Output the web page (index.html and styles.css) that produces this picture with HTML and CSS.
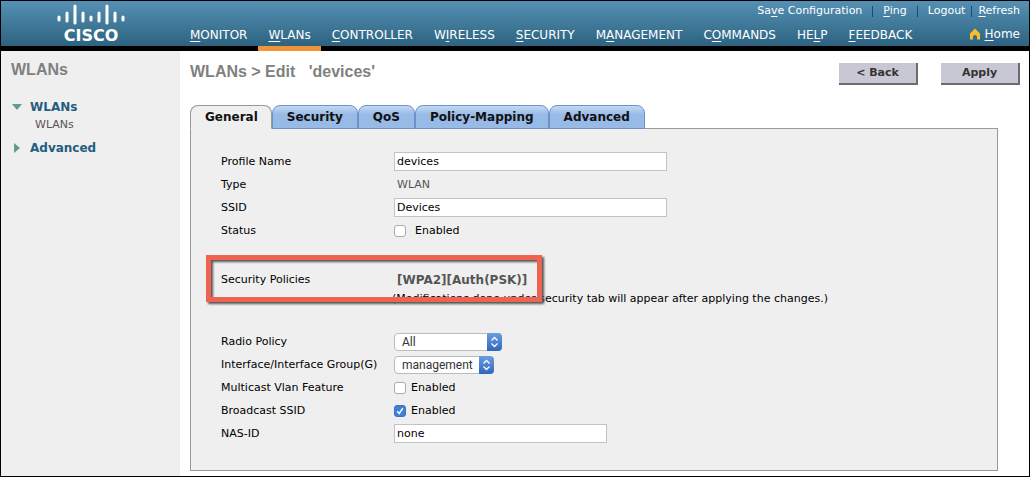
FILE: index.html
```html
<!DOCTYPE html>
<html lang="en">
<head>
<meta charset="utf-8">
<title>WLANs &gt; Edit 'devices'</title>
<link rel="stylesheet" href="styles.css">
</head>
<body>
<header class="header">
  <div class="brand">
    <svg class="logo" width="68" height="25" viewBox="0 0 68 25" aria-hidden="true">
      <path d="M2 16v3M10 12v8M18 5v17M26 12v8M34 16v3M42 12v8M50 5v17M58 12v8M66 16v3" stroke="#fff" stroke-width="3" stroke-linecap="round"/>
    </svg>
    <span class="logo-text">CISCO</span>
  </div>
  <nav class="nav" aria-label="Main">
    <a href="#"><u>M</u>ONITOR</a>
    <a href="#" class="current" aria-current="page"><u>W</u>LANs</a>
    <a href="#"><u>C</u>ONTROLLER</a>
    <a href="#">W<u>I</u>RELESS</a>
    <a href="#"><u>S</u>ECURITY</a>
    <a href="#">M<u>A</u>NAGEMENT</a>
    <a href="#">C<u>O</u>MMANDS</a>
    <a href="#">HE<u>L</u>P</a>
    <a href="#"><u>F</u>EEDBACK</a>
  </nav>
  <div class="tools">
    <div class="links">
      <a href="#">Sa<u>v</u>e Configuration</a><i class="bar"></i>
      <a href="#"><u>P</u>ing</a><i class="bar"></i>
      <a href="#">Logout</a><i class="bar tight"></i>
      <a href="#"><u>R</u>efresh</a>
    </div>
    <a class="home" href="#">
      <svg width="12" height="13" viewBox="0 0 12 13" aria-hidden="true"><path d="M1 5.500L6 0.500 11 5.500V11.500H8V8.500Q8 7 6 7T4 8.500V11.500H1Z" fill="#f8bd2c"/></svg>
      <span><u>H</u>ome</span>
    </a>
  </div>
</header>
<div class="body">
  <aside class="sidebar">
    <h2 class="title">WLANs</h2>
    <nav class="tree" aria-label="WLANs">
      <a class="branch" href="#"><svg width="12" height="12" viewBox="0 0 12 12" aria-hidden="true"><path d="M1 3h10L6 9z" fill="#5f9a94"/></svg>WLANs</a>
      <a class="leaf" href="#">WLANs</a>
      <a class="branch" href="#"><svg width="12" height="12" viewBox="0 0 12 12" aria-hidden="true"><path d="M3 1v10L9 6z" fill="#5f9a94"/></svg>Advanced</a>
    </nav>
  </aside>
  <main class="main">
    <div class="page-head">
      <h1 class="title">WLANs &gt; Edit &nbsp; 'devices'</h1>
      <div class="actions">
        <button type="button">&lt; Back</button>
        <button type="button">Apply</button>
      </div>
    </div>
    <div class="tabs" role="tablist">
      <button type="button" role="tab" aria-selected="true">General</button>
      <button type="button" role="tab" aria-selected="false">Security</button>
      <button type="button" role="tab" aria-selected="false">QoS</button>
      <button type="button" role="tab" aria-selected="false">Policy-Mapping</button>
      <button type="button" role="tab" aria-selected="false">Advanced</button>
    </div>
    <form class="panel">
      <div class="row"><label for="profile">Profile Name</label><input class="text" id="profile" type="text" value="devices"></div>
      <div class="row"><span>Type</span><span class="value">WLAN</span></div>
      <div class="row"><label for="ssid">SSID</label><input class="text" id="ssid" type="text" value="Devices"></div>
      <div class="row"><span>Status</span><label class="check spaced"><input type="checkbox">Enabled</label></div>
      <div class="policies">
        <div class="row"><span>Security Policies</span><strong class="value">[WPA2][Auth(PSK)]</strong></div>
        <p class="note">(Modifications done under security tab will appear after applying the changes.)</p>
        <div class="highlight"></div>
      </div>
      <div class="row"><label for="radio">Radio Policy</label>
        <div class="select wide"><select id="radio"><option>All</option></select><svg width="15" height="18" viewBox="0 0 15 18" aria-hidden="true"><path d="M4.500 7.500l3-3 3 3M4.500 10.500l3 3 3-3" fill="none" stroke="#fff" stroke-width="1.300"/></svg></div></div>
      <div class="row"><label for="iface">Interface/Interface Group(G)</label>
        <div class="select"><select id="iface"><option>management</option></select><svg width="15" height="18" viewBox="0 0 15 18" aria-hidden="true"><path d="M4.500 7.500l3-3 3 3M4.500 10.500l3 3 3-3" fill="none" stroke="#fff" stroke-width="1.300"/></svg></div></div>
      <div class="row"><span>Multicast Vlan Feature</span><label class="check"><input type="checkbox">Enabled</label></div>
      <div class="row"><span>Broadcast SSID</span><label class="check"><input type="checkbox" checked>Enabled</label></div>
      <div class="row"><label for="nas">NAS-ID</label><input class="text short" id="nas" type="text" value="none"></div>
    </form>
  </main>
</div>
</body>
</html>
```

FILE: styles.css
```css
* { box-sizing: border-box; }

body {
  margin: 0;
  min-height: 100vh;
  display: flex;
  flex-direction: column;
  border: 1px solid #000;
  background: #fff;
  color: #000;
  font: 11px/16px Verdana, "DejaVu Sans", sans-serif;
}

a { color: inherit; text-decoration: none; }
button, input, select { font: inherit; color: inherit; }
u { text-underline-offset: 2px; }

/* Header */
.header {
  display: flex;
  height: 50px;
  border-bottom: 5px solid #000;
  background: linear-gradient(#5590b3, #2d6381);
  color: #fff;
}
.brand { flex: none; width: 179px; padding-left: 56px; }
.logo { display: block; }
.logo-text {
  display: block;
  width: 68px;
  font-size: 16px;
  font-weight: bold;
  line-height: 20px;
  text-align: center;
}

.nav { display: flex; align-items: flex-end; gap: 1px; height: 50px; }
.nav a {
  height: 29px;
  padding: 5px 10px 0;
  border-bottom: 5px solid transparent;
  font-size: 12px;
}
.nav .current { border-color: #f0943a; }

.tools {
  flex: 1;
  display: flex;
  flex-direction: column;
  align-items: flex-end;
  gap: 7px;
  padding: 2px 9px 0 0;
  width: 0;
  white-space: nowrap;
}
.links { display: flex; align-items: center; }
.bar { width: 1px; height: 11px; margin: 0 10px; background: #1d4a72; }
.tight { margin: 0 6px; }
.home { display: flex; align-items: center; gap: 4px; font-size: 12px; }

/* Sidebar */
.body { flex: 1; display: flex; }
.sidebar { flex: none; width: 179px; padding: 10px; background: #efefef; }
.title { margin: 0; color: #808080; font: bold 16px/18px Arial, "Liberation Sans", sans-serif; }
.tree { display: flex; flex-direction: column; padding-top: 18px; }
.branch { display: flex; align-items: center; gap: 7px; height: 20px; color: #255d7e; font-size: 12px; font-weight: bold; }
.leaf { height: 21px; padding-left: 24px; color: #555; }

/* Page heading */
.main { flex: 1; min-width: 0; padding: 12px 9px 5px 10px; }
.page-head { display: flex; justify-content: space-between; height: 42px; }
.actions { display: flex; gap: 23px; }
.actions button {
  width: 79px;
  height: 22px;
  padding: 0;
  border: solid #6b6b70;
  border-width: 0 2px 2px 0;
  background: #c8c8d4;
  color: #333;
  font-weight: bold;
}

/* Tabs */
.tabs { display: flex; height: 23px; }
.tabs button {
  height: 24px;
  padding: 0 14px;
  border: 1px solid #6b93cb;
  border-radius: 8px 8px 0 0;
  background: linear-gradient(#c3d9f3, #98bae6 40%);
  color: #111;
  font-size: 12px;
  font-weight: bold;
}
.tabs button[aria-selected="true"] {
  position: relative;
  padding-right: 13px;
  border-color: #999;
  border-bottom-color: #efefef;
  background: #efefef;
}

/* Form */
.panel {
  margin-right: 22px;
  padding: 21px 30px 25px;
  border: 1px solid #999;
  background: #efefef;
}
.row { display: grid; grid-template-columns: 173px 1fr; align-items: center; height: 23px; }
.value { padding-left: 3px; color: #555; }
strong.value { font-size: 12px; }
.text {
  width: 273px;
  height: 19px;
  padding: 0 2px;
  border: 1px solid #c3c3c3;
  background: #fff;
}
.short { width: 213px; }

.check { display: flex; align-items: center; gap: 5px; }
.spaced { gap: 9px; }
.check input {
  appearance: none;
  width: 12px;
  height: 12px;
  margin: 0;
  border: 1px solid #aaa;
  border-radius: 3px;
  background: #fff;
}
.check input:checked {
  border-color: #3a74c8;
  background: #3f7fd4 url("data:image/svg+xml,%3Csvg xmlns='http://www.w3.org/2000/svg' viewBox='0 0 10 10'%3E%3Cpath d='M2.200 5.200l2 2.300L7.800 2.300' fill='none' stroke='white' stroke-width='1.500'/%3E%3C/svg%3E") center / 10px;
}

.policies { position: relative; padding: 26px 0 24px; }
.note { margin: 0; padding-left: 171px; line-height: 15px; }
.highlight {
  position: absolute;
  left: -15px;
  top: 13px;
  width: 336px;
  height: 47px;
  border: 5px solid #ee6352;
  filter: drop-shadow(2px 2px 1px #555);
}

.select { display: grid; grid-template-columns: 1fr 15px; width: 100px; height: 18px; }
.wide { width: 108px; }
.select select {
  grid-area: 1 / 1 / 2 / 3;
  appearance: none;
  padding: 0 7px;
  border: 1px solid #bbb;
  border-radius: 4px;
  background: #fff;
  color: #333;
  font-family: Roboto, sans-serif;
  font-size: 12px;
}
.select svg {
  grid-area: 1 / 2;
  border-radius: 0 4px 4px 0;
  background: linear-gradient(#6a9ee0, #2f66bd);
  pointer-events: none;
}
```
